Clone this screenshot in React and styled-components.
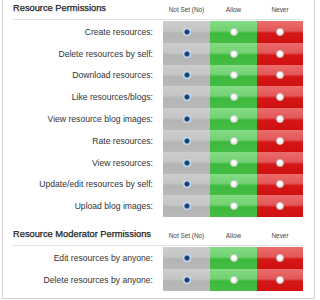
import styled, { createGlobalStyle, css } from "styled-components";

const GlobalStyle = createGlobalStyle`
  html, body {
    margin: 0;
    padding: 0;
    background: #ffffff;
  }
`;

const Frame = styled.div`
  box-sizing: border-box;
  margin-left: 2px;
  width: 313px;
  height: 299px;
  border: 1px solid #d2d2d2;
  border-top: none;
  background: #ffffff;
  padding: 0 11px 0 9px;
  font-family: "Liberation Sans", Arial, sans-serif;
`;

const Section = styled.div`
  display: flex;
  flex-direction: column;
  margin-top: ${(p) => p.$top || 0}px;
`;

const Grid = styled.div`
  display: grid;
  grid-template-columns: 1fr 47px 47px 46px;
`;

const HeaderRow = styled(Grid)`
  height: 19px;
  align-items: center;
  border-bottom: 1px solid #e2e2e2;
  margin-bottom: 1px;
`;

const Title = styled.div`
  padding-left: 1px;
  padding-bottom: 3px;
  font-size: 9.3px;
  color: #1c1c1c;
  -webkit-text-stroke: 0.25px #1c1c1c;
  white-space: nowrap;
`;

const ColHead = styled.div`
  text-align: center;
  font-size: 6.4px;
  color: #444;
  padding-bottom: 1px;
  white-space: nowrap;
`;

const Row = styled(Grid)`
  height: 21.8px;
`;

const Label = styled.div`
  display: flex;
  align-items: center;
  justify-content: flex-end;
  padding-right: 10px;
  font-size: 8.6px;
  color: #333;
  white-space: nowrap;
`;

const tones = {
  none: css`
    background: linear-gradient(
      to bottom,
      #cdcdcd 0%,
      #c5c5c5 44%,
      #b4b4b4 56%,
      #b9b9b9 100%
    );
  `,
  allow: css`
    background: linear-gradient(
      to bottom,
      #84dc84 0%,
      #74d174 44%,
      #3db93d 56%,
      #45bd45 100%
    );
  `,
  never: css`
    background: linear-gradient(
      to bottom,
      #eb6c6c 0%,
      #e35858 44%,
      #d31616 56%,
      #d01111 100%
    );
  `,
};

const Cell = styled.div`
  display: flex;
  align-items: center;
  justify-content: center;
  ${(p) => tones[p.$tone]}
`;

const Radio = styled.span`
  box-sizing: border-box;
  width: 8px;
  height: 8px;
  border-radius: 50%;
  ${(p) =>
    p.$checked
      ? css`
          background: radial-gradient(circle, #163e6e 0 1.6px, #2f6aa6 2.1px, #a9c8e2 3.1px, #dde8f0 4px);
        `
      : css`
          background: radial-gradient(circle at 45% 40%, #ffffff 0 1.4px, #e4e4e4 3.6px);
          border: 1px solid #d0d0d0;
        `}
`;

const basic = [
  "Create resources:",
  "Delete resources by self:",
  "Download resources:",
  "Like resources/blogs:",
  "View resource blog images:",
  "Rate resources:",
  "View resources:",
  "Update/edit resources by self:",
  "Upload blog images:",
];

const moderator = ["Edit resources by anyone:", "Delete resources by anyone:"];

function PermissionSection({ title, items, top }) {
  return (
    <Section $top={top}>
      <HeaderRow>
        <Title>{title}</Title>
        <ColHead>Not Set (No)</ColHead>
        <ColHead>Allow</ColHead>
        <ColHead>Never</ColHead>
      </HeaderRow>
      {items.map((label) => (
        <Row key={label}>
          <Label>{label}</Label>
          <Cell $tone="none">
            <Radio $checked />
          </Cell>
          <Cell $tone="allow">
            <Radio />
          </Cell>
          <Cell $tone="never">
            <Radio />
          </Cell>
        </Row>
      ))}
    </Section>
  );
}

export default function App() {
  return (
    <>
      <GlobalStyle />
      <Frame>
        <PermissionSection title="Resource Permissions" items={basic} />
        <PermissionSection
          title="Resource Moderator Permissions"
          items={moderator}
          top={9}
        />
      </Frame>
    </>
  );
}
